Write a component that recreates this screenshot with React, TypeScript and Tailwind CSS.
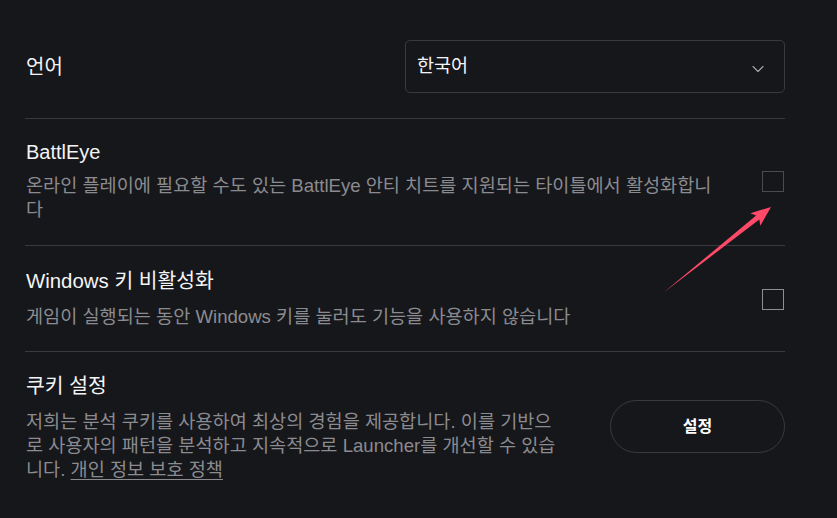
import React from 'react';
import { ChevronDown } from 'lucide-react';

const FONT = "font-['Liberation_Sans','Noto_Sans_CJK_KR',sans-serif]";

const Checkbox: React.FC<{ dim?: boolean }> = ({ dim }) => (
  <div
    className={`w-[22px] h-[21px] shrink-0 border ${dim ? 'border-[#4a4a4f]' : 'border-[#8e8e90]'}`}
  />
);

export default function App() {
  return (
    <div className={`relative min-h-[518px] w-full bg-[#16171b] ${FONT}`}>
      <div className="ml-[25px] w-[760px] flex flex-col">
        {/* language */}
        <div className="flex items-center justify-between pt-[40px] pb-[25px] border-b border-[#3a3a3e]">
          <span className="pl-[1px] text-[20px] text-[#f4f4f5]">언어</span>
          <div className="w-[380px] h-[53px] rounded-[5px] border border-[#3a3a3e] flex items-center justify-between pl-[11px] pr-[16px]">
            <span className="text-[18.5px] text-[#f4f4f5] -mt-[2px]">한국어</span>
            <ChevronDown size={20} strokeWidth={1.3} className="text-[#a8a8ab] mt-[4px]" />
          </div>
        </div>

        {/* battleye */}
        <div className="flex items-center justify-between pt-[21px] pb-[23px] border-b border-[#3a3a3e]">
          <div className="pl-[1px] flex flex-col gap-[10px] w-[700px]">
            <span className="text-[20px] leading-[24px] text-[#f4f4f5]">BattlEye</span>
            <p className="text-[18.6px] leading-[24px] text-[#8b8b8f] break-all">
              온라인 플레이에 필요할 수도 있는 BattlEye 안티 치트를 지원되는 타이틀에서 활성화합니다
            </p>
          </div>
          <div className="mr-[1px]"><Checkbox dim /></div>
        </div>

        {/* windows key */}
        <div className="flex items-center justify-between pt-[23px] pb-[22px] border-b border-[#3a3a3e]">
          <div className="pl-[1px] flex flex-col gap-[12px] w-[700px]">
            <span className="text-[20.4px] leading-[24px] text-[#f4f4f5]">Windows 키 비활성화</span>
            <p className="text-[18.6px] leading-[24px] text-[#8b8b8f] break-all">
              게임이 실행되는 동안 Windows 키를 눌러도 기능을 사용하지 않습니다
            </p>
          </div>
          <div className="mr-[1px]"><Checkbox /></div>
        </div>

        {/* cookies */}
        <div className="flex items-center justify-between pt-[22px] pb-[22px]">
          <div className="pl-[1px] flex flex-col gap-[12px] w-[537px]">
            <span className="text-[20.4px] leading-[24px] text-[#f4f4f5]">쿠키 설정</span>
            <p className="text-[18.6px] leading-[24px] text-[#8b8b8f] break-all">
              저희는 분석 쿠키를 사용하여 최상의 경험을 제공합니다. 이를 기반으로 사용자의 패턴을 분석하고 지속적으로 Launcher를 개선할 수 있습니다.{' '}
              <a className="underline underline-offset-[3px]">개인 정보 보호 정책</a>
            </p>
          </div>
          <button className="w-[175px] h-[53px] -mt-[3px] rounded-full border border-[#3a3a3e] text-[16px] font-bold text-white">
            설정
          </button>
        </div>
      </div>

      {/* annotation arrow */}
      <svg className="absolute inset-0 pointer-events-none" width="837" height="518" viewBox="0 0 837 518">
        <polygon
          points="663,293 756.1,215.6 750.3,213.2 771,207 760.3,225.8 759.3,219.6"
          fill="#fe4a68"
        />
      </svg>
    </div>
  );
}
